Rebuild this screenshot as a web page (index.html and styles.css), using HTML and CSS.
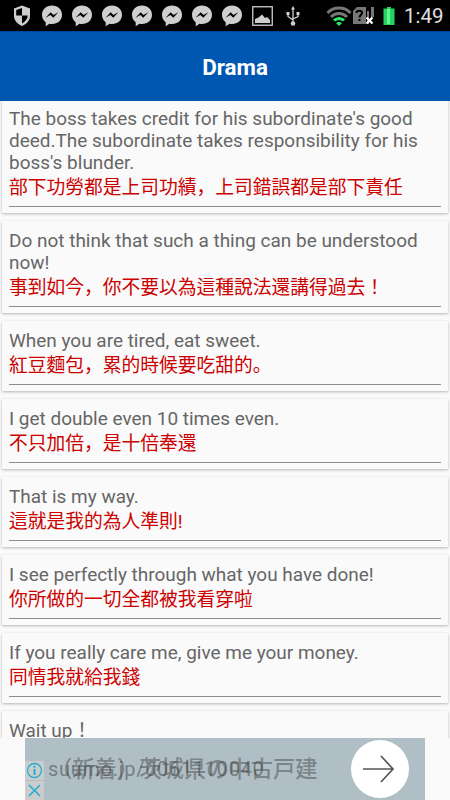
FILE: index.html
```html
<!DOCTYPE html>
<html lang="en">
<head>
  <meta charset="UTF-8" />
  <meta name="viewport" content="width=device-width, initial-scale=1.0"/>
  <title>Drama</title>
  <link rel="stylesheet" href="styles.css">
</head>
<body>

  <svg width="0" height="0" class="defs">
    <symbol id="messenger" viewBox="0 0 22 22">
      <path fill="#cfcfcf" d="M11 0.5C5.200.5 1 4.500 1 9.800c0 3.200 1.300 5.700 3.700 7.500v4l3.800-2.500c.8.2 1.600.3 2.500.3 5.800 0 10-4 10-9.300S16.800.5 11 .5z"/>
      <path fill="#000" d="M4.500 12.800l5.200-5.500 2.800 2.600 4.800-2.600-5 5.500-3-2.700z"/>
    </symbol>
  </svg>

  <div class="status-bar">
    <div class="status-left">
      <svg class="shield" width="18" height="22" viewBox="0 0 18 22">
        <path fill="#cfcfcf" d="M9 .5l8 3v7.500c0 4.500-3.500 8-8 10-4.500-2-8-5.500-8-10V3.500z"/>
        <path fill="#000" d="M9 3v7.500H3.200V5zM9 10.500h5.800c-.2 3.500-2.500 6-5.800 8z"/>
      </svg>
      <svg class="messenger"><use href="#messenger"/></svg>
      <svg class="messenger"><use href="#messenger"/></svg>
      <svg class="messenger"><use href="#messenger"/></svg>
      <svg class="messenger"><use href="#messenger"/></svg>
      <svg class="messenger"><use href="#messenger"/></svg>
      <svg class="messenger"><use href="#messenger"/></svg>
      <svg class="messenger"><use href="#messenger"/></svg>
      <svg class="picture" width="21" height="20" viewBox="0 0 21 20">
        <rect x=".75" y=".75" width="19.500" height="18.500" fill="none" stroke="#cfcfcf" stroke-width="1.300"/>
        <path fill="#cfcfcf" d="M3 17v-4l3.500-1.500L10 8.500l3 3.500 2-1 3 3V17z"/>
      </svg>
      <svg class="usb" width="14" height="20" viewBox="0 0 14 20">
        <path fill="none" stroke="#cfcfcf" stroke-width="1.300" d="M7 3v14M2 7v3.500l5 3.500M12 6v4.500L7 13"/>
        <path fill="#cfcfcf" d="M7 0l2 3.500H5zM.5 6h3v3h-3zM10.500 6h3v3h-3z"/>
        <circle cx="7" cy="17.500" r="2.300" fill="#cfcfcf"/>
      </svg>
    </div>
    <div class="status-right">
      <svg class="wifi" width="26" height="20" viewBox="0 0 26 20">
        <g fill="none" stroke-width="3">
          <path stroke="#777" d="M1.500 7a16 16 0 0 1 23 0"/>
          <path stroke="#777" d="M5 11a11 11 0 0 1 16 0"/>
          <path stroke="#2bea6c" d="M8 14.500a7 7 0 0 1 10 0"/>
        </g>
        <path fill="#2bea6c" d="M10 17q3-2 6 0L13 20z"/>
      </svg>
      <svg class="sim" width="22" height="19" viewBox="0 0 22 19">
        <path fill="#777" d="M4 1h9v17H0V5zM14 5h2v13h-2zM18 1h3v10h-3z"/>
        <path fill="none" stroke="#000" stroke-width="2" d="M3.500 7c0-3 5.500-3 5.500 0 0 2-2.500 2-2.500 4.500M6.500 13v2"/>
        <path stroke="#fff" stroke-width="2.200" d="M13.500 11.500l6 6M19.500 11.500l-6 6"/>
      </svg>
      <svg class="battery" width="12" height="20" viewBox="0 0 12 20">
        <path fill="#27d160" d="M4 1h4v1.500h3.500V19H.5V2.500H4z"/>
        <path fill="#5df795" d="M4 3h3v15H4z"/>
      </svg>
      <span class="clock">1:49</span>
    </div>
  </div>

  <div class="header">Drama</div>

  <div class="list">
    <div class="card">
      <p class="en">The boss takes credit for his subordinate's good<br>deed.The subordinate takes responsibility for his<br>boss's blunder.</p>
      <p class="zh">部下功勞都是上司功績，上司錯誤都是部下責任</p>
    </div>
    <div class="card">
      <p class="en">Do not think that such a thing can be understood<br>now!</p>
      <p class="zh">事到如今，你不要以為這種說法還講得過去！</p>
    </div>
    <div class="card">
      <p class="en">When you are tired, eat sweet.</p>
      <p class="zh">紅豆麵包，累的時候要吃甜的。</p>
    </div>
    <div class="card">
      <p class="en">I get double even 10 times even.</p>
      <p class="zh">不只加倍，是十倍奉還</p>
    </div>
    <div class="card">
      <p class="en">That is my way.</p>
      <p class="zh">這就是我的為人準則!</p>
    </div>
    <div class="card">
      <p class="en">I see perfectly through what you have done!</p>
      <p class="zh">你所做的一切全都被我看穿啦</p>
    </div>
    <div class="card">
      <p class="en">If you really care me, give me your money.</p>
      <p class="zh">同情我就給我錢</p>
    </div>
    <div class="card">
      <p class="en">Wait up！</p>
      <p class="zh"></p>
    </div>
  </div>

  <div class="ad-bar">
    <div class="ad">
      <span class="ad-url">suumo.jp/0061110040</span>
      <span class="ad-title">（新着）茨城県の中古戸建</span>
      <div class="ad-badges">
        <svg width="19" height="19" viewBox="0 0 19 19">
          <circle cx="9.500" cy="9.500" r="7" fill="none" stroke="#1fafd0" stroke-width="1.300"/>
          <path stroke="#1fafd0" stroke-width="2" d="M9.500 8v6M9.500 4.700v2"/>
        </svg>
        <svg width="19" height="19" viewBox="0 0 19 19">
          <path stroke="#1fafd0" stroke-width="1.500" d="M4 4l11 11M15 4L4 15"/>
        </svg>
      </div>
      <div class="ad-go">
        <svg width="58" height="58" viewBox="0 0 58 58">
          <path fill="none" stroke="#555" stroke-width="1.700" d="M12 29h30M30 16l12 13-12 13"/>
        </svg>
      </div>
    </div>
  </div>

</body>
</html>
```
FILE: styles.css
```css
* {
  box-sizing: border-box;
}
body {
  margin: 0;
  height: 800px;
  font-family: Roboto, "Noto Sans CJK JP", sans-serif;
  background: #fafafa;
  display: flex;
  flex-direction: column;
  overflow: hidden;
}
svg {
  display: block;
  flex: none;
}
.defs {
  position: absolute;
}
.status-bar {
  height: 31px;
  flex: none;
  background: #000;
  display: flex;
  justify-content: space-between;
  align-items: center;
  padding: 0 7px 0 13px;
}
.status-left,
.status-right {
  display: flex;
  align-items: center;
}
.shield {
  margin-right: 10px;
}
.messenger {
  width: 22px;
  height: 22px;
  margin-right: 8px;
}
.picture {
  margin-left: 1px;
  margin-right: 13px;
}
.wifi {
  margin-right: 1px;
}
.sim {
  margin-right: 8px;
}
.battery {
  margin-right: 9px;
}
.clock {
  width: 39px;
  font-size: 20.5px;
  line-height: 31px;
  padding-top: 2px;
  color: #e0e0e0;
}
.header {
  height: 70px;
  flex: none;
  background: #0057b2;
  border-top: 1px solid #00499a;
  color: #fff;
  font-size: 22.4px;
  font-weight: 700;
  line-height: 70px;
  text-align: center;
  padding-left: 20px;
}
.list {
  flex: 1;
  min-height: 0;
  overflow: hidden;
  padding: 0 2px;
}
.card {
  margin-bottom: 8px;
  padding: 9px 7px 6px;
  border-radius: 1px;
  background: #fafafa;
  box-shadow: 0 1px 3px rgba(0, 0, 0, 0.28);
}
.card:first-child {
  margin-top: -2px;
}
.en {
  margin: 0;
  font-size: 18.98px;
  line-height: 22px;
  color: #666;
  white-space: nowrap;
}
.zh {
  margin: 0;
  height: 33px;
  font-size: 18.75px;
  line-height: 29px;
  color: #c00;
  border-bottom: 1px solid #8c8c8c;
  white-space: nowrap;
}
.ad-bar {
  height: 62px;
  flex: none;
  background: #fafafa;
  position: relative;
  display: flex;
  justify-content: center;
}
.ad {
  width: 400px;
  background: #b0bec5;
  position: relative;
}
.ad-url,
.ad-title {
  position: absolute;
  white-space: nowrap;
  line-height: 30px;
}
.ad-url {
  left: 23px;
  top: 16px;
  font-size: 20px;
  letter-spacing: 0.7px;
  color: rgba(60, 60, 60, 0.5);
}
.ad-title {
  left: 25px;
  top: 14px;
  font-size: 22.3px;
  font-weight: 500;
  font-family: "Noto Sans CJK JP", sans-serif;
  color: rgba(60, 60, 60, 0.45);
}
.ad-badges {
  position: absolute;
  left: 0;
  top: 23px;
}
.ad-badges svg {
  background: #ccc;
  margin-bottom: 1px;
}
.ad-go {
  position: absolute;
  left: 326px;
  top: 2px;
  border-radius: 50%;
  background: #fff;
}
```
